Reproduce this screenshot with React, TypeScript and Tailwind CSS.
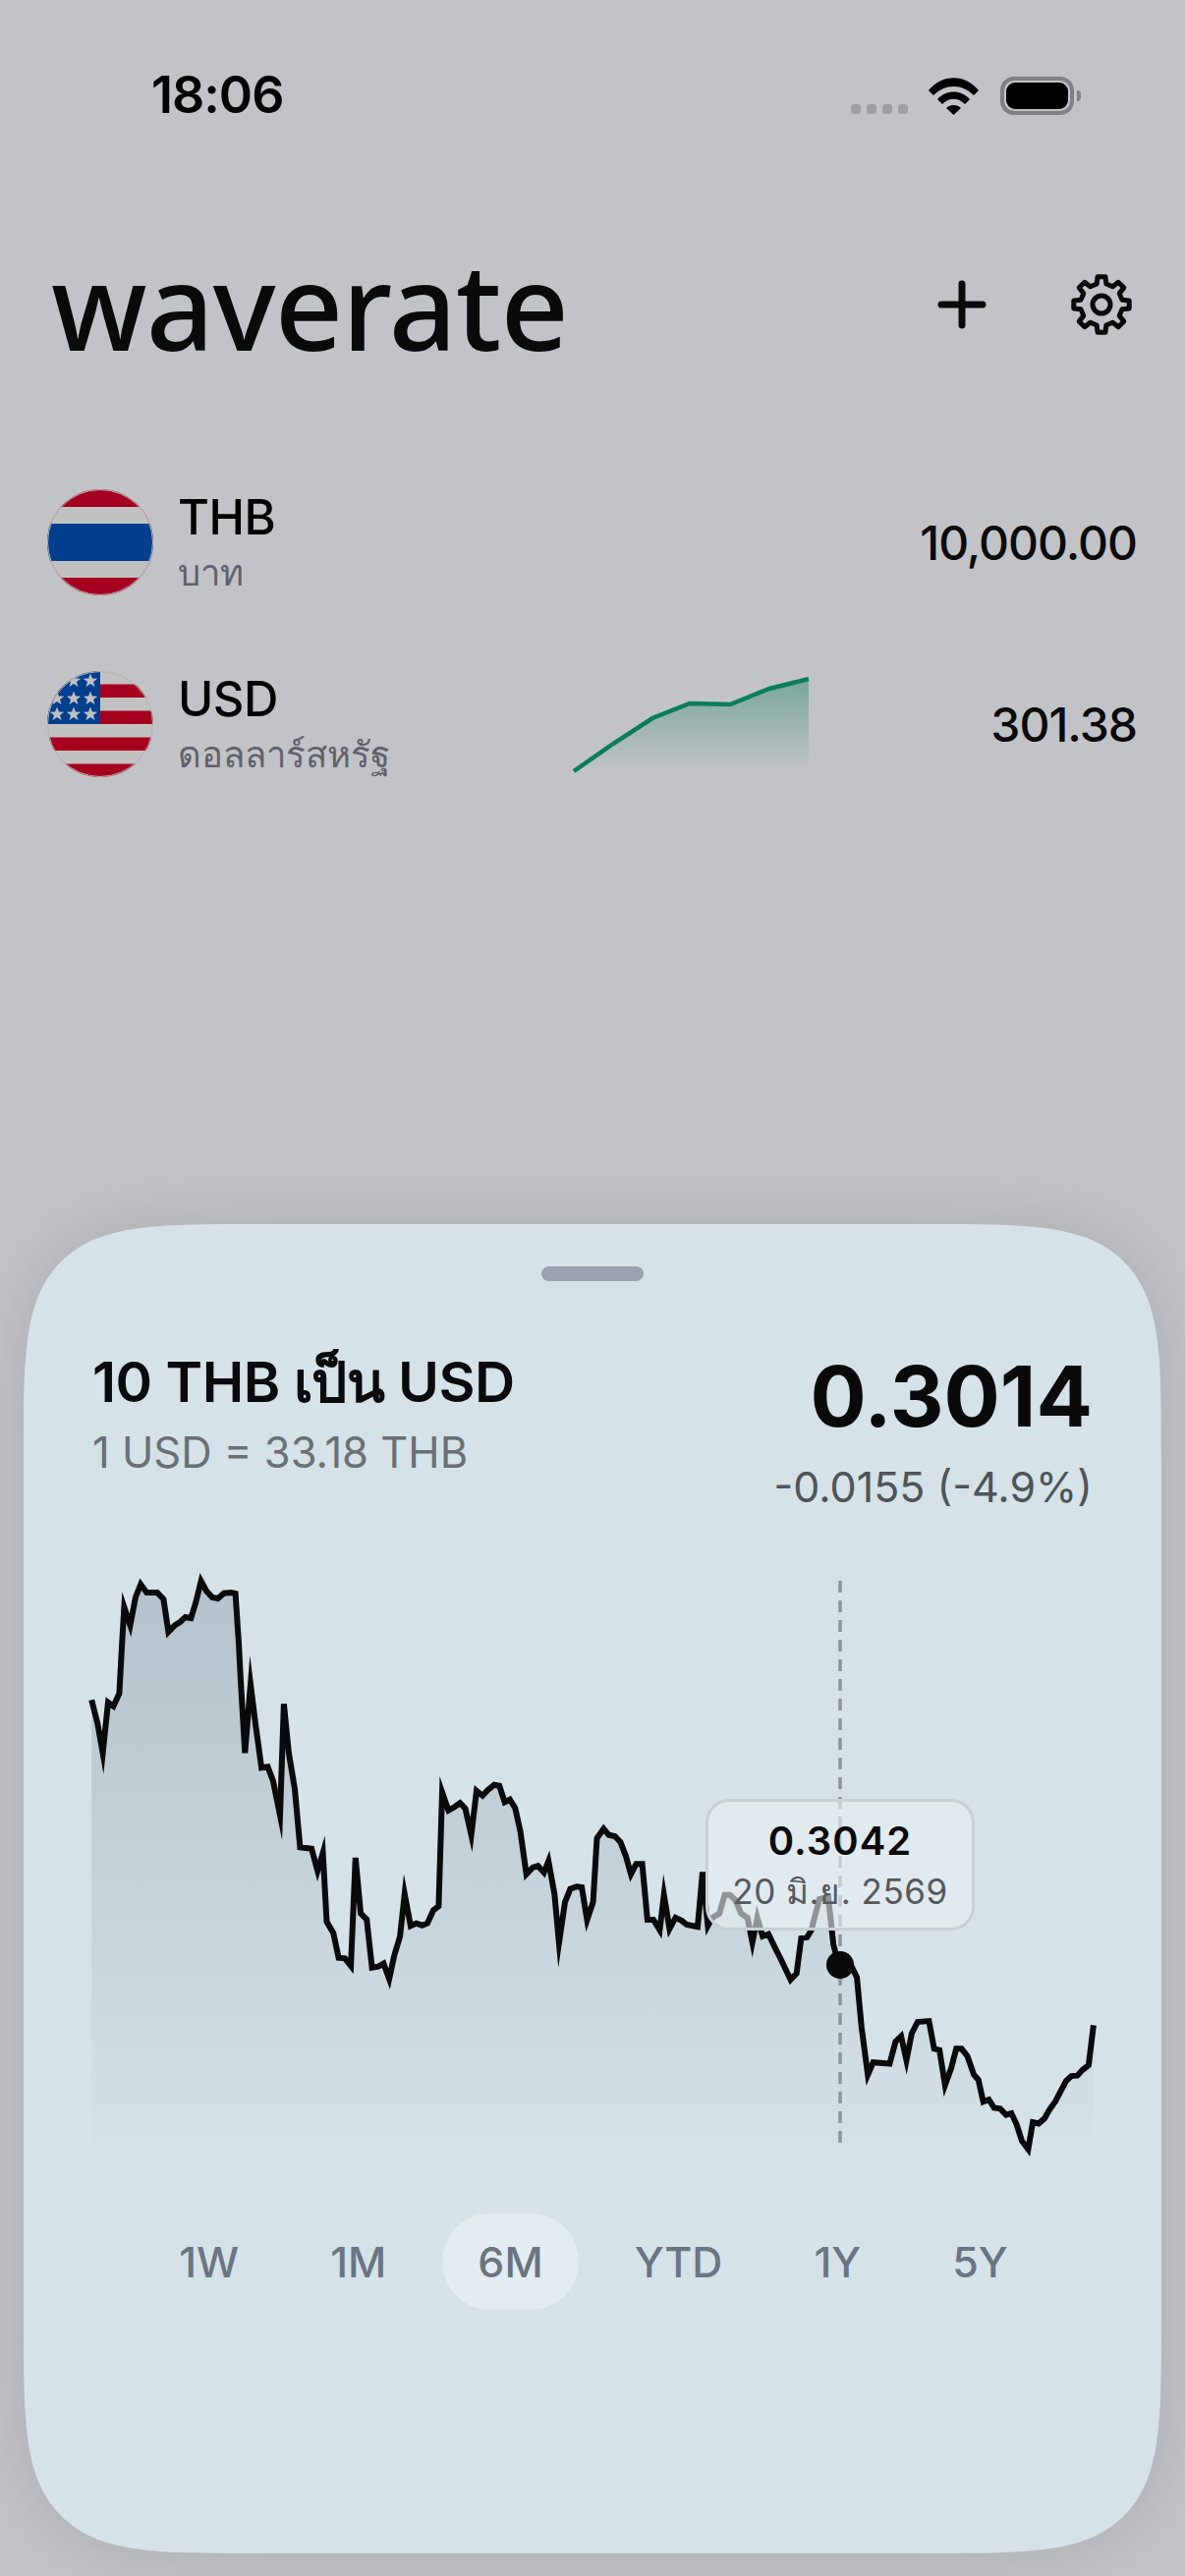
import React from 'react';
import { Plus } from 'lucide-react';

// chart points read off the reference, in page pixels once mapped below
const leftRaw = [[93,478],[110,550],[125,640],[140,485],[155,497],[172,458],[180,300],[186,195],[203,250],[218,165],[233,125],[250,150],[280,150],[298,170],[312,270],[330,250],[345,240],[360,225],[376,228],[390,180],[405,115],[420,145],[437,165],[453,168],[470,152],[490,150],[503,153],[512,300],[518,420],[530,640],[546,430],[560,550],[577,685],[595,682],[610,725],[630,830],[641,490],[655,640],[672,750],[687,928],[720,932],[737,1000],[752,945],[763,1155],[782,1190],[797,1265],[815,1267],[832,1290],[845,960],[860,1130],[877,1148],[892,1295],[910,1292],[925,1283],[941,1330],[955,1260],[972,1200],[985,1070],[1002,1168],[1018,1160],[1035,1166],[1050,1160],[1067,1120],[1082,1108],[1092,760],[1110,815],[1127,805],[1143,793],[1158,810],[1175,890],[1190,755],[1207,770],[1223,752],[1240,737],[1255,740],[1270,790],[1285,782],[1300,808],[1315,880],[1332,1010],[1350,990],[1365,985],[1382,1005],[1395,970],[1412,1070],[1425,1220],[1442,1095],[1457,1055],[1475,1048],[1490,1050],[1505,1150],[1522,1095],[1533,900]];
const rightRaw = [[40,690],[55,705],[72,708],[88,722],[103,755],[118,800],[133,775],[150,775],[165,910],[182,910],[200,935],[212,850],[228,932],[245,905],[262,912],[277,922],[295,925],[308,927],[322,795],[337,925],[350,905],[370,895],[385,850],[400,850],[415,862],[432,895],[450,905],[464,965],[478,905],[493,950],[510,945],[527,975],[545,1005],[573,1055],[590,1040],[603,955],[620,952],[632,935],[655,860],[680,855],[695,970],[710,1020],[745,1020],[762,1050],[775,1170],[793,1285],[808,1255],[855,1258],[872,1205],[888,1192],[903,1250],[918,1185],[935,1157],[967,1155],[982,1222],[997,1225],[1013,1310],[1030,1270],[1045,1222],[1060,1222],[1077,1240],[1095,1285],[1108,1297],[1122,1350],[1138,1345],[1153,1365],[1170,1367],[1187,1382],[1202,1378],[1217,1405],[1232,1445],[1250,1465],[1263,1400],[1280,1403],[1297,1390],[1310,1370],[1327,1350],[1358,1300],[1373,1288],[1390,1287],[1405,1273],[1422,1262],[1436,1165]];

const chartPoints = [
  ...leftRaw.map(([x, y]) => [60 + x / 2.8 - 24, 1570 + y / 3 - 1600]),
  ...rightRaw.map(([x, y]) => [600 + x / 2.8 - 24, 1570 + y / 2.376 - 1600]),
].map(([x, y]) => `${x.toFixed(1)},${y.toFixed(1)}`);

const ranges = ['1W', '1M', '6M', 'YTD', '1Y', '5Y'];

// eight rounded teeth around the hub
function gearPoints() {
  const pts: string[] = [];
  for (let i = 0; i < 8; i++) {
    const a = (i * Math.PI) / 4;
    const at = (deg: number, r: number) => {
      const t = a + (deg * Math.PI) / 180;
      return `${(34 + r * Math.sin(t)).toFixed(2)},${(34 - r * Math.cos(t)).toFixed(2)}`;
    };
    pts.push(at(-13, 21.5), at(-8, 28.5), at(8, 28.5), at(13, 21.5));
  }
  return pts.join(' ');
}

function Gear() {
  return (
    <svg width="68" height="68" viewBox="0 0 68 68" fill="none" stroke="#0a0a0a" strokeWidth="5" strokeLinejoin="round">
      <polygon points={gearPoints()} />
      <circle cx="34" cy="34" r="9" />
    </svg>
  );
}

function ThaiFlag() {
  return (
    <svg width="108" height="108" viewBox="0 0 108 108" className="shrink-0">
      <clipPath id="thb"><circle cx="54" cy="54" r="54" /></clipPath>
      <g clipPath="url(#thb)">
        <rect width="108" height="108" fill="#a6001f" />
        <rect y="18" width="108" height="72" fill="#c1c1c2" />
        <rect y="35" width="108" height="38" fill="#003f8e" />
      </g>
      <circle cx="54" cy="54" r="53.5" fill="none" stroke="#b3b3b6" />
    </svg>
  );
}

function UsFlag() {
  const stars = [[27, 10], [44, 10], [10, 28], [27, 28], [44, 28], [10, 44], [27, 44], [44, 44]];
  return (
    <svg width="108" height="108" viewBox="0 0 108 108" className="shrink-0">
      <clipPath id="usd"><circle cx="54" cy="54" r="54" /></clipPath>
      <g clipPath="url(#usd)">
        <rect width="108" height="108" fill="#c1c1c2" />
        {[13.5, 40.5, 67.5, 94.5].map((y) => (
          <rect key={y} y={y} width="108" height="13.5" fill="#a6001f" />
        ))}
        <rect width="54" height="54" fill="#003f8e" />
        {stars.map(([x, y]) => (
          <polygon
            key={`${x}-${y}`}
            transform={`translate(${x} ${y})`}
            fill="#c1c1c2"
            points="0,-7.5 1.9,-2.4 7.2,-2.3 3,1 4.5,6.1 0,3.1 -4.5,6.1 -3,1 -7.2,-2.3 -1.9,-2.4"
          />
        ))}
      </g>
      <circle cx="54" cy="54" r="53.5" fill="none" stroke="#b3b3b6" />
    </svg>
  );
}

function Sparkline() {
  return (
    <svg width="244" height="100" viewBox="0 0 244 100" className="mt-[3px] shrink-0">
      <defs>
        <linearGradient id="spark" x1="0" y1="0" x2="0" y2="1">
          <stop offset="0" stopColor="#0a7d5a" stopOpacity="0.4" />
          <stop offset="1" stopColor="#0a7d5a" stopOpacity="0" />
        </linearGradient>
      </defs>
      <path d="M2 96 L42 68 L82 42 L120 27 L161 28 L201 12 L241 2 L241 96 Z" fill="url(#spark)" />
      <path d="M2 96 L42 68 L82 42 L120 27 L161 28 L201 12 L241 2" fill="none" stroke="#0a7d5a" strokeWidth="4.5" />
    </svg>
  );
}

function StatusBar() {
  return (
    <div className="flex h-[118px] items-center justify-between pl-[154px] pr-[106px] pt-[76px]">
      <span className="text-[52px] font-semibold leading-none tracking-[-1px] text-black">18:06</span>
      <div className="flex items-end gap-[22px]">
        <div className="mb-[1px] flex gap-[6px]">
          {[0, 1, 2, 3].map((i) => (
            <div key={i} className="h-[10px] w-[10px] rounded-[3px] bg-[#9fa0a3]" />
          ))}
        </div>
        <svg width="51" height="38" viewBox="0 0 51 38" className="-ml-[1px]">
          <path d="M0 13 C14 -4 37 -4 51 13 L46 18 C34 6 17 6 5 18 Z" fill="#000" />
          <path d="M9 22 C18 12 33 12 42 22 L37 27 C30 20 21 20 14 27 Z" fill="#000" />
          <path d="M18 31 C22 27 29 27 33 31 L25.5 38 Z" fill="#000" />
        </svg>
        <div className="flex items-center gap-[3px]">
          <div className="flex h-[39px] w-[75px] items-center justify-center rounded-[14px] border-[4px] border-[#7f8083]">
            <div className="h-[27px] w-[63px] rounded-[9px] bg-black" />
          </div>
          <div className="h-[11px] w-[4px] rounded-r-full bg-[#7f8083]" />
        </div>
      </div>
    </div>
  );
}

function CurrencyRow({ flag, code, name, amount, spark }: { flag: React.ReactNode; code: string; name: string; amount: string; spark?: boolean }) {
  return (
    <div className="flex h-[108px] items-center pl-[48px] pr-[49px]">
      {flag}
      <div className="ml-[26px] w-[400px] shrink-0 pt-[2px]">
        <div className="-ml-[1px] text-[49px] font-[550] leading-[56px] tracking-[-0.5px] text-black">{code}</div>
        <div className="-ml-[1px] mt-[4px] text-[36.5px] leading-[48px] text-[#5f626b]">{name}</div>
      </div>
      {spark && <Sparkline />}
      <div className="ml-auto pt-[2px] text-[48px] font-medium leading-none tracking-[-1px] text-[#0a0a0a]">{amount}</div>
    </div>
  );
}

function Chart() {
  const line = chartPoints.join(' ');
  const area = `M${chartPoints[0]} L${chartPoints.join(' L')} L${chartPoints[chartPoints.length - 1].split(',')[0]},600 L${chartPoints[0].split(',')[0]},600 Z`;
  return (
    <div className="relative mt-[61px] h-[600px]">
      <svg width="1158" height="600" viewBox="0 0 1158 600" className="absolute left-0 top-0">
        <defs>
          <linearGradient id="area" x1="0" y1="0" x2="0" y2="1">
            <stop offset="0" stopColor="#b4c2cb" />
            <stop offset="1" stopColor="#d5e2e8" />
          </linearGradient>
        </defs>
        <path d={area} fill="url(#area)" />
        <line x1="831" y1="8" x2="831" y2="584" stroke="#8d9498" strokeWidth="3.5" strokeDasharray="12 8" />
        <polyline points={line} fill="none" stroke="#0a0a0a" strokeWidth="6" strokeMiterlimit="10" />
        <circle cx="831" cy="399" r="14" fill="#0a0a0a" />
      </svg>
      <div className="absolute left-[694px] top-[230px] flex h-[134px] w-[274px] flex-col items-center rounded-[24px] border-[3px] border-[#c6d0d5] bg-[#e9f0f3]/60 pt-[15px]">
        <span className="text-[40px] font-semibold leading-[50px] tracking-[1px] text-[#0a0a0a]">0.3042</span>
        <span className="mt-[5px] text-[35px] leading-[42px] tracking-[0.5px] text-[#55595d]">20 มิ.ย. 2569</span>
      </div>
    </div>
  );
}

export default function App() {
  return (
    <div className="flex h-[2622px] w-[1206px] flex-col overflow-hidden bg-[#c2c3c7] font-['Inter','Noto_Sans','DejaVu_Sans',sans-serif]">
      <StatusBar />

      <div className="mt-[132px] flex items-center justify-between pl-[52px] pr-[51px]">
        <h1 className="font-['Noto_Sans',sans-serif] text-[121px] font-[550] leading-[120px] tracking-[-1px] text-[#0a0a0a]">waverate</h1>
        <div className="flex items-center gap-[72px]">
          <Plus size={72} strokeWidth={2.33} color="#0a0a0a" />
          <Gear />
        </div>
      </div>

      <div className="mt-[128px] flex flex-col gap-[77px]">
        <CurrencyRow flag={<ThaiFlag />} code="THB" name="บาท" amount="10,000.00" />
        <CurrencyRow flag={<UsFlag />} code="USD" name="ดอลลาร์สหรัฐ" amount="301.38" spark />
      </div>

      <div className="mx-[24px] mt-[455px] h-[1353px] rounded-[240px] bg-[#d5e2e8] shadow-[0_0_70px_rgba(0,0,0,0.12)] [corner-shape:squircle]">
        <div className="mx-auto mt-[43px] h-[15px] w-[104px] rounded-full bg-[#9aa1ae]" />

        <div className="mt-[69px] flex items-start justify-between pl-[70px] pr-[70px]">
          <div>
            <div className="text-[57px] font-semibold leading-[68px] tracking-[-0.5px] text-[#0a0a0a]">10 THB เป็น USD</div>
            <div className="mt-[10px] text-[43.5px] leading-[54px] text-[#6a7074]">1 USD = 33.18 THB</div>
          </div>
          <div className="flex flex-col items-end pt-[4px]">
            <div className="text-[85px] font-bold leading-[90px] text-[#0a0a0a]">0.3014</div>
            <div className="mt-[19px] text-[43px] leading-[54px] text-[#4f5457]">-0.0155 (-4.9%)</div>
          </div>
        </div>

        <Chart />

        <div className="mt-[52px] flex justify-center gap-[21px] pl-[2px]">
          {ranges.map((r) => (
            <div
              key={r}
              className={`flex h-[98px] items-center rounded-full px-[36px] text-[43px] font-medium text-[#6b7582] ${r === '6M' ? 'bg-[#e3ecf0]' : ''}`}
            >
              {r}
            </div>
          ))}
        </div>
      </div>
    </div>
  );
}
